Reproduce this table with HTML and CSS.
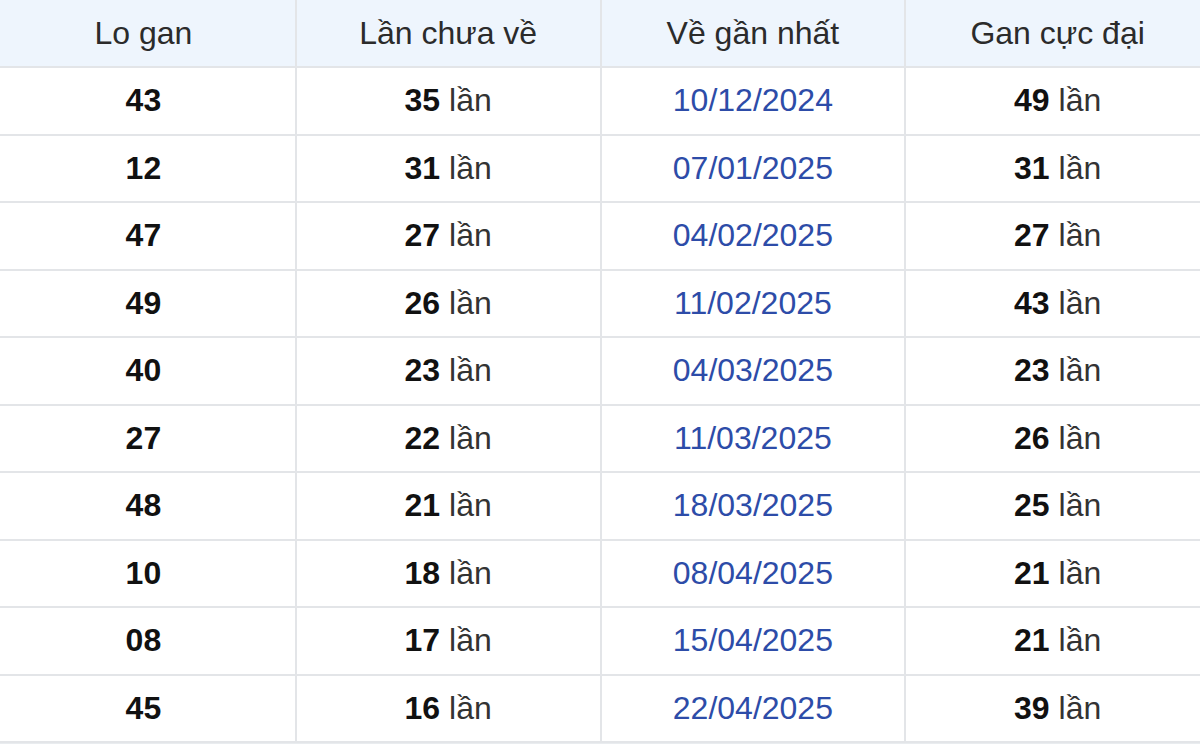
FILE: index.html
```html
<!DOCTYPE html>
<html lang="vi">
<head>
<meta charset="utf-8">
<title>Lo gan</title>
<link rel="stylesheet" href="styles.css">
</head>
<body>
<div class="wrap">
<table class="gan">
  <thead>
    <tr><th>Lo gan</th><th>Lần chưa về</th><th>Về gần nhất</th><th>Gan cực đại</th></tr>
  </thead>
  <tbody>
    <tr><td><b>43</b></td><td><b>35</b> lần</td><td class="date">10/12/2024</td><td><b>49</b> lần</td></tr>
    <tr><td><b>12</b></td><td><b>31</b> lần</td><td class="date">07/01/2025</td><td><b>31</b> lần</td></tr>
    <tr><td><b>47</b></td><td><b>27</b> lần</td><td class="date">04/02/2025</td><td><b>27</b> lần</td></tr>
    <tr><td><b>49</b></td><td><b>26</b> lần</td><td class="date">11/02/2025</td><td><b>43</b> lần</td></tr>
    <tr><td><b>40</b></td><td><b>23</b> lần</td><td class="date">04/03/2025</td><td><b>23</b> lần</td></tr>
    <tr><td><b>27</b></td><td><b>22</b> lần</td><td class="date">11/03/2025</td><td><b>26</b> lần</td></tr>
    <tr><td><b>48</b></td><td><b>21</b> lần</td><td class="date">18/03/2025</td><td><b>25</b> lần</td></tr>
    <tr><td><b>10</b></td><td><b>18</b> lần</td><td class="date">08/04/2025</td><td><b>21</b> lần</td></tr>
    <tr><td><b>08</b></td><td><b>17</b> lần</td><td class="date">15/04/2025</td><td><b>21</b> lần</td></tr>
    <tr><td><b>45</b></td><td><b>16</b> lần</td><td class="date">22/04/2025</td><td><b>39</b> lần</td></tr>
  </tbody>
</table>
</div>
</body>
</html>
```

FILE: styles.css
```css
html, body {
  margin: 0;
  padding: 0;
  background: #ffffff;
  overflow: hidden;
}
.wrap {
  width: 1200px;
  height: 744px;
  overflow: hidden;
  background: #e9ecef;
}
.gan {
  border-collapse: collapse;
  table-layout: fixed;
  width: 1221px;
  margin-left: -10px;
  font-family: "Liberation Sans", Arial, sans-serif;
  font-size: 32px;
  color: #222222;
  background: #ffffff;
}
.gan th, .gan td {
  border: 2px solid #e3e5e8;
  text-align: center;
  vertical-align: middle;
  padding: 0;
}
.gan th {
  height: 66px;
  background: #eef5fd;
  font-weight: normal;
  color: #2b2b2b;
  border-top: none;
}
.gan td {
  height: 65.5px;
  color: #333333;
}
.gan td b {
  font-weight: bold;
  color: #111111;
}
.gan td.date {
  color: #2d4ca8;
}
```
